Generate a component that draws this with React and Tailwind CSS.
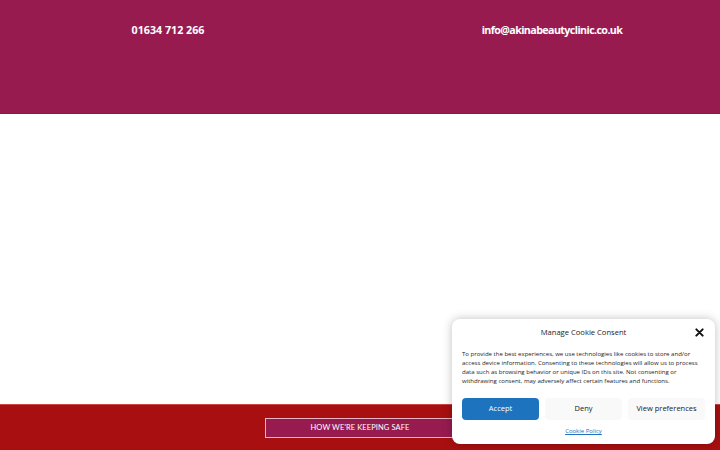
import { useState } from "react";

function CookieBanner({ onClose }) {
  return (
    <div className="absolute right-[5px] bottom-[6px] w-[263px] bg-white rounded-lg shadow-[0_0_10px_rgba(0,0,0,0.25)] px-[10px] pt-[9px] pb-[8px] text-[#222]">
      <div className="relative flex items-center justify-center h-[10px]">
        <h4 className="text-[7.6px] leading-none">Manage Cookie Consent</h4>
        <button
          onClick={onClose}
          className="absolute right-[1px] top-0 text-[#111]"
          aria-label="Close"
        >
          <svg width="9" height="9" viewBox="0 0 10 10">
            <path d="M1.5 1.5 L8.5 8.5 M8.5 1.5 L1.5 8.5" stroke="currentColor" strokeWidth="2.2" strokeLinecap="round" />
          </svg>
        </button>
      </div>
      <p className="mt-[12px] text-[6.05px] leading-[9px] text-[#222]">
        To provide the best experiences, we use technologies like cookies to store and/or access device information. Consenting to these technologies will allow us to process data such as browsing behavior or unique IDs on this site. Not consenting or withdrawing consent, may adversely affect certain features and functions.
      </p>
      <div className="mt-[12px] grid grid-cols-3 gap-[6px]">
        <button className="h-[22px] rounded-[4px] bg-[#1e73be] text-white text-[7.5px]">Accept</button>
        <button className="h-[22px] rounded-[4px] bg-[#f9f9f9] text-[#222] text-[7.5px]">Deny</button>
        <button className="h-[22px] rounded-[4px] bg-[#f9f9f9] text-[#222] text-[7.5px]">View preferences</button>
      </div>
      <div className="mt-[7px] flex justify-center">
        <a href="#" className="text-[6px] text-[#1e73be] underline">Cookie Policy</a>
      </div>
    </div>
  );
}

export default function App() {
  const [showBanner, setShowBanner] = useState(true);

  return (
    <div
      className="relative h-screen flex flex-col bg-white overflow-hidden"
      style={{ fontFamily: "'Open Sans', sans-serif" }}
    >
      {/* contact strip */}
      <header className="h-[114px] bg-[#981b50] border-b border-[#8a1747] grid grid-cols-2 gap-12">
        <div className="pt-[22px] text-center text-white font-bold text-[10.7px]">01634 712 266</div>
        <div className="pt-[22px] text-center text-white font-bold text-[10.7px] tracking-[-0.6px]">info@akinabeautyclinic.co.uk</div>
      </header>

      <main className="flex-1" />

      <footer className="h-[46px] bg-[#a80f10] border-t border-[#c44] flex items-start pl-[265px] pt-[13px]">
        <a
          href="#"
          className="w-[190px] h-[20px] flex items-center justify-center bg-[#981b50] border border-[#e9b5c4] text-white text-[7.5px] uppercase tracking-[0.1px]"
          style={{ fontFamily: "Lato, sans-serif" }}
        >
          How we're keeping safe
        </a>
      </footer>

      {showBanner && <CookieBanner onClose={() => setShowBanner(false)} />}
    </div>
  );
}
